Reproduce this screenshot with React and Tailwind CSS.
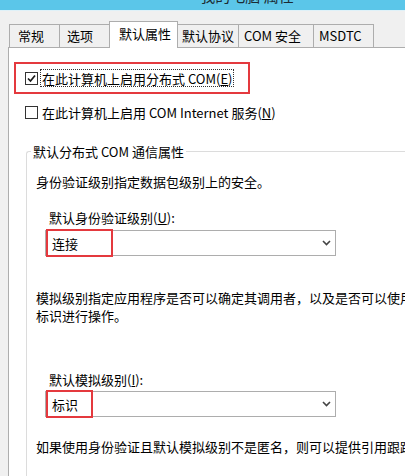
import React from "react";

const FONT = "font-['Noto_Sans_CJK_SC','Noto_Sans',sans-serif]";

const tabs = [
    { label: "常规", w: "w-[51px]", pl: "pl-[8px]" },
    { label: "选项", w: "w-[50px]", pl: "pl-[7px]" },
    { label: "默认属性", w: "w-[69px]", pl: "pl-[9px]", active: true },
    { label: "默认协议", w: "w-[61px]", pl: "pl-[4px]" },
    { label: "COM 安全", w: "w-[75px]", pl: "pl-[5px]" },
    { label: "MSDTC", w: "w-[60px]", pl: "pl-[5px]" },
];

const CheckBox = ({ checked }) => (
    <span className="flex items-center justify-center w-[13px] h-[13px] border border-[#333333] bg-white shrink-0">
        {checked && (
            <svg width="9" height="9" viewBox="0 0 9 9">
                <polyline
                    points="1,4.5 3.5,7 8,1.5"
                    fill="none"
                    stroke="#1a1a1a"
                    strokeWidth="1.7"
                />
            </svg>
        )}
    </span>
);

const Combo = ({ value, boxWidth }) => (
    <div className="relative ml-[9px] w-[291px] h-[26px] border border-[#adadad] bg-white flex items-center justify-between pl-[6px] pr-[4px]">
        <span className="text-[13px] leading-none text-black">{value}</span>
        <svg width="9" height="6" viewBox="0 0 9 6">
            <polyline
                points="1,1 4.5,4.5 8,1"
                fill="none"
                stroke="#444444"
                strokeWidth="1.6"
            />
        </svg>
        <span
            className={`absolute left-0 -top-[2px] h-[28px] border-2 border-[#e4393e] ${boxWidth}`}
        />
    </div>
);

export default function App() {
    return (
        <div className={`w-[405px] h-[476px] overflow-hidden bg-[#f0f0f0] text-black ${FONT}`}>
            <div className="w-[494px]">
                <div className="h-[10px] bg-[#5bc6e9] overflow-hidden flex justify-center">
                    <span className="text-[15px] leading-none -mt-[12px] text-[#1c2a33]">
                        我的电脑 属性
                    </span>
                </div>
                <div className="h-px bg-[#dff1f8]" />

                <div className="flex items-end pl-[9px] mt-[10px] h-[26px]">
                    {tabs.map((t) => (
                        <div
                            key={t.label}
                            className={`${t.w} ${t.pl} flex items-center text-[13px] whitespace-nowrap border-t border-r border-[#adadad] first:border-l ${
                                t.active
                                    ? "h-[27px] bg-white -mb-px relative z-10 border-l -ml-px pb-[3px]"
                                    : "h-[23px] bg-[#f0f0f0]"
                            }`}
                        >
                            {t.label}
                        </div>
                    ))}
                </div>

                <div className="ml-[8px] bg-white border-t border-l border-[#adadad] h-[440px] pt-[14px]">
                    <div className="ml-[5px] w-[236px] h-[32px] border-2 border-[#e4393e] flex items-center pl-[9px]">
                        <CheckBox checked />
                        <span className="ml-[2px] border border-dotted border-[#333333] px-[1px] h-[18px] flex items-center text-[13px] leading-none whitespace-nowrap">
                            在此计算机上启用分布式 COM(<span className="underline">E</span>)
                        </span>
                    </div>

                    <div className="mt-[9px] ml-[16px] h-[18px] flex items-center">
                        <CheckBox />
                        <span className="ml-[3px] px-[1px] text-[13px] leading-none whitespace-nowrap">
                            在此计算机上启用 COM Internet 服务(<span className="underline">N</span>)
                        </span>
                    </div>

                    <div className="relative mt-[30px] ml-[17px] border-t border-l border-[#dcdcdc] rounded-tl-[3px] pl-[9px] pt-[21px] h-[330px]">
                        <span className="absolute left-[4px] -top-[9px] bg-white px-[2px] text-[13px] leading-[18px] whitespace-nowrap">
                            默认分布式 COM 通信属性
                        </span>

                        <p className="text-[13px] leading-[18px] whitespace-nowrap">
                            身份验证级别指定数据包级别上的安全。
                        </p>

                        <p className="mt-[18px] ml-[13px] text-[13px] leading-[18px] whitespace-nowrap">
                            默认身份验证级别(<span className="underline">U</span>):
                        </p>
                        <div className="mt-[3px]">
                            <Combo value="连接" boxWidth="w-[67px]" />
                        </div>

                        <p className="mt-[33px] w-[440px] text-[13px] leading-[18px]">
                            模拟级别指定应用程序是否可以确定其调用者，以及是否可以使用客户端的标识进行操作。
                        </p>

                        <p className="mt-[46px] ml-[13px] text-[13px] leading-[18px] whitespace-nowrap">
                            默认模拟级别(<span className="underline">I</span>):
                        </p>
                        <div className="mt-[2px]">
                            <Combo value="标识" boxWidth="w-[47px]" />
                        </div>

                        <p className="mt-[21px] text-[13px] leading-[18px] whitespace-nowrap">
                            如果使用身份验证且默认模拟级别不是匿名，则可以提供引用跟踪安全。
                        </p>
                    </div>
                </div>
            </div>
        </div>
    );
}
